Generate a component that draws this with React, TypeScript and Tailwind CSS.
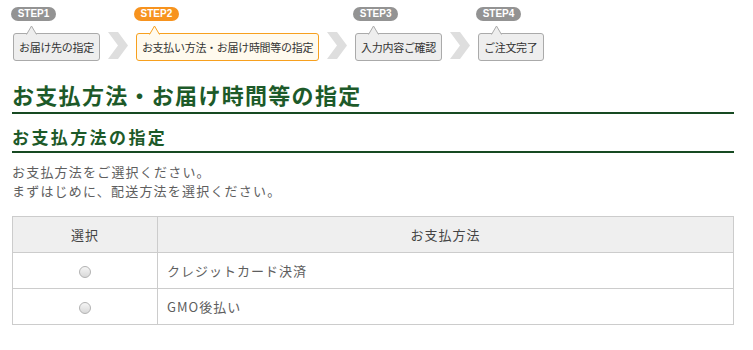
import React from "react";

const steps = [
  { label: "STEP1", text: "お届け先の指定", active: false },
  { label: "STEP2", text: "お支払い方法・お届け時間等の指定", active: true },
  { label: "STEP3", text: "入力内容ご確認", active: false },
  { label: "STEP4", text: "ご注文完了", active: false },
];

const methods = ["クレジットカード決済", "GMO後払い"];

const Chevron = () => (
  <svg width="20" height="27" viewBox="0 0 20 27" className="mx-[8px] mb-[2px] shrink-0">
    <polygon points="0,0 10,0 20,13.5 10,27 0,27 10,13.5" fill="#dedede" />
  </svg>
);

const Step = ({ label, text, active }: { label: string; text: string; active: boolean }) => {
  const border = active ? "#f7a01e" : "#aaaaaa";
  const fill = active ? "#fffaee" : "#eeeeee";
  return (
    <div className="flex flex-col items-start">
      <div
        className={
          "-ml-[2px] w-[45px] h-[14px] rounded-full flex items-center justify-center text-white text-[10px] font-bold font-['Liberation_Sans',sans-serif] leading-none " +
          (active ? "bg-[#f7931e]" : "bg-[#939393]")
        }
      >
        {label}
      </div>
      <div
        className={
          "relative mt-[12px] h-[28px] px-[5px] flex items-center rounded-[3px] border text-[11px] text-[#333] tracking-[-0.3px] whitespace-nowrap " +
          (active ? "border-[#f7a01e] bg-[#fffaee]" : "border-[#aaaaaa] bg-[#eeeeee]")
        }
      >
        <svg width="11" height="10" viewBox="0 0 11 10" className="absolute -top-[9px] left-[12px]">
          <polygon points="0,10 5.5,1 11,10" fill={fill} />
          <polyline points="0.5,9.5 5.5,1 10.5,9.5" fill="none" stroke={border} strokeWidth="1" />
        </svg>
        {text}
      </div>
    </div>
  );
};

const Radio = () => (
  <span className="inline-block w-[12px] h-[12px] rounded-full border border-[#b3b3b3] bg-linear-to-b from-[#f5f5f5] to-[#d9d9d9] align-middle" />
);

export default function App() {
  return (
    <div className="w-[753px] h-[350px] bg-white px-3 pt-[7px] font-['Noto_Sans_CJK_JP',sans-serif] text-[#5e5e5e]">
      <div className="flex items-end pl-[1px]">
        {steps.map((s, i) => (
          <React.Fragment key={s.label}>
            {i > 0 && <Chevron />}
            <Step {...s} />
          </React.Fragment>
        ))}
      </div>

      <h1 className="mt-[18px] w-[722px] text-[22px] leading-[30px] font-bold text-[#1d5a29] tracking-[1.3px] pb-[3px] border-b-2 border-[#174a22]">
        お支払方法・お届け時間等の指定
      </h1>
      <h2 className="mt-[10px] w-[722px] text-[17px] leading-[26px] font-bold text-[#1d5a29] tracking-[2.4px] pb-[1px] border-b-2 border-[#174a22]">
        お支払方法の指定
      </h2>

      <div className="mt-[9px] text-[13px] leading-[19px] tracking-[1.2px]">
        <p>お支払方法をご選択ください。</p>
        <p>まずはじめに、配送方法を選択ください。</p>
      </div>

      <table className="mt-[16px] w-[722px] border-collapse border border-[#cccccc] text-[13px] tracking-[1px]">
        <thead>
          <tr className="bg-[#efefef] h-[36px]">
            <th className="w-[145px] border border-[#cccccc] font-normal text-[#444]">選択</th>
            <th className="border border-[#cccccc] font-normal text-[#444]">お支払方法</th>
          </tr>
        </thead>
        <tbody>
          {methods.map((m) => (
            <tr key={m} className="h-[36px]">
              <td className="border border-[#cccccc] text-center">
                <Radio />
              </td>
              <td className="border border-[#cccccc] pl-[9px]">{m}</td>
            </tr>
          ))}
        </tbody>
      </table>
    </div>
  );
}
